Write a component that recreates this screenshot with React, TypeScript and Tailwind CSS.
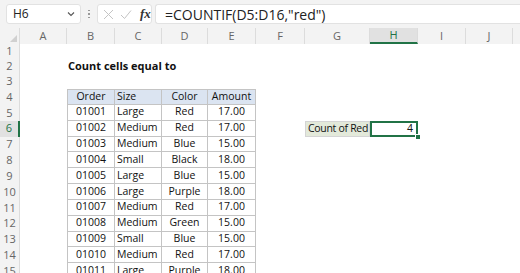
import React from "react";

const COLS: { key: string; w: number }[] = [
  { key: "A", w: 47 },
  { key: "B", w: 48 },
  { key: "C", w: 47 },
  { key: "D", w: 46 },
  { key: "E", w: 48 },
  { key: "F", w: 49 },
  { key: "G", w: 65 },
  { key: "H", w: 48 },
  { key: "I", w: 48 },
  { key: "J", w: 47 },
  { key: "K", w: 60 },
];

const DATA: string[][] = [
  ["01001", "Large", "Red", "17.00"],
  ["01002", "Medium", "Red", "17.00"],
  ["01003", "Medium", "Blue", "15.00"],
  ["01004", "Small", "Black", "18.00"],
  ["01005", "Large", "Blue", "15.00"],
  ["01006", "Large", "Purple", "18.00"],
  ["01007", "Medium", "Red", "17.00"],
  ["01008", "Medium", "Green", "15.00"],
  ["01009", "Small", "Blue", "15.00"],
  ["01010", "Medium", "Red", "17.00"],
  ["01011", "Large", "Purple", "18.00"],
  ["01012", "Small", "Blue", "15.00"],
];

const cellFont = { fontFamily: '"Open Sans", "Noto Sans", sans-serif' };

function FormulaBar() {
  return (
    <div className="flex h-[28px] items-center bg-[#f3f3f3] pl-[6px]">
      <div className="flex h-[20px] w-[75px] items-center justify-between rounded-[3px] border border-[#e2e2e2] bg-white pl-[6px] pr-[4px]">
        <span className="text-[12px] text-[#222]">H6</span>
        <svg width="10" height="10" viewBox="0 0 10 10" fill="none">
          <path d="M2 3.5 L5 6.5 L8 3.5" stroke="#555" strokeWidth="1.1" />
        </svg>
      </div>
      <div className="flex w-[16px] flex-col items-center justify-center gap-[2px]">
        <div className="h-[1.5px] w-[1.5px] bg-[#999]" />
        <div className="h-[1.5px] w-[1.5px] bg-[#999]" />
        <div className="h-[1.5px] w-[1.5px] bg-[#999]" />
      </div>
      <div className="flex h-[20px] w-[55px] items-center gap-[6px] rounded-[3px] border border-[#e2e2e2] bg-white pl-[5px]">
        <svg width="11" height="11" viewBox="0 0 11 11" fill="none">
          <path d="M1 1 L10 10 M10 1 L1 10" stroke="#c4c4c4" strokeWidth="1" />
        </svg>
        <svg width="12" height="11" viewBox="0 0 12 11" fill="none">
          <path d="M1 6 L4.5 9.5 L11 1.5" stroke="#c4c4c4" strokeWidth="1" />
        </svg>
        <span
          className="ml-[2px] text-[13px] italic font-bold text-[#333]"
          style={{ fontFamily: '"Liberation Serif", serif' }}
        >
          fx
        </span>
      </div>
      <div className="ml-[3px] flex h-[20px] flex-1 items-center rounded-l-[3px] border border-r-0 border-[#e2e2e2] bg-white pl-[9px]">
        <span className="text-[14px] text-[#222]">=COUNTIF(D5:D16,"red")</span>
      </div>
    </div>
  );
}

function ColumnHeader() {
  return (
    <div className="flex h-[16px] bg-[#f3f3f3]">
      <div className="relative w-[20px] shrink-0 border-r border-[#dcdcdc]">
        <svg className="absolute bottom-[2px] right-[2px]" width="7" height="7" viewBox="0 0 7 7">
          <path d="M7 0 L7 7 L0 7 Z" fill="#d0d0d0" />
        </svg>
      </div>
      {COLS.map((c) => {
        const sel = c.key === "H";
        return (
          <div
            key={c.key}
            style={{ width: c.w }}
            className={
              "flex shrink-0 items-center justify-center border-r border-[#dcdcdc] text-[11px] " +
              (sel
                ? "border-b-2 border-b-[#217346] bg-[#e1e1e1] text-[#217346]"
                : "text-[#666]")
            }
          >
            {c.key === "K" ? "" : c.key}
          </div>
        );
      })}
    </div>
  );
}

function tableCell(row: number, colIdx: number) {
  const header = row === 4;
  const vals = header ? ["Order", "Size", "Color", "Amount"] : DATA[row - 5];
  const v = vals[colIdx - 1];
  let cls = "flex h-full items-center whitespace-nowrap border-b border-r border-[#c4c4c4] ";
  if (colIdx === 1) cls += "border-l ";
  if (header) cls += "border-t bg-[#dbe4f1] ";
  if (colIdx === 2) cls += "justify-start pl-[2px] ";
  else cls += "justify-center ";
  return { cls, v };
}

function Row({ n, h }: { n: number; h: string }) {
  const selRow = n === 6;
  return (
    <div className={"flex " + h}>
      <div
        className={
          "flex w-[20px] shrink-0 items-center justify-center text-[11px] " +
          (selRow
            ? "border-r-2 border-r-[#217346] bg-[#e1e1e1] text-[#217346]"
            : "border-r border-[#dcdcdc] bg-[#f3f3f3] text-[#666]")
        }
      >
        {n}
      </div>
      {COLS.map((c, i) => {
        let content: React.ReactNode = null;
        const cls = "relative shrink-0 h-full text-[10.5px] text-[#111] ";
        if (n === 2 && c.key === "B") {
          content = (
            <div className="absolute left-0 top-0 flex h-full items-center whitespace-nowrap pl-[1px] text-[11px] font-bold">
              Count cells equal to
            </div>
          );
        } else if (n >= 4 && n <= 16 && i >= 1 && i <= 4) {
          const t = tableCell(n, i);
          content = <div className={t.cls}>{t.v}</div>;
        } else if (n === 6 && c.key === "G") {
          content = (
            <div className="flex h-full items-center whitespace-nowrap border border-[#d4d4d4] bg-[#e3e9da] pl-[2px] text-[10.5px] tracking-[-0.3px]">
              Count of Red
            </div>
          );
        } else if (n === 6 && c.key === "H") {
          content = (
            <>
              <div className="flex h-full items-center justify-end border-2 border-[#217346] bg-white pr-[3px]">
                4
              </div>
              <div className="absolute -bottom-[3px] -right-[3px] h-[6px] w-[6px] border border-white bg-[#217346]" />
            </>
          );
        }
        return (
          <div key={c.key} style={{ width: c.w }} className={cls}>
            {content}
          </div>
        );
      })}
    </div>
  );
}

export default function App() {
  const rows = Array.from({ length: 16 }, (_, i) => i + 1);
  return (
    <div
      className="h-[273px] w-[520px] overflow-hidden bg-white"
      style={{ fontFamily: '"Open Sans", "Noto Sans", sans-serif' }}
    >
      <FormulaBar />
      <ColumnHeader />
      <div style={cellFont}>
        {rows.map((n) => (
          <Row key={n} n={n} h={n <= 3 ? "h-[15px]" : "h-[15.85px]"} />
        ))}
      </div>
    </div>
  );
}
